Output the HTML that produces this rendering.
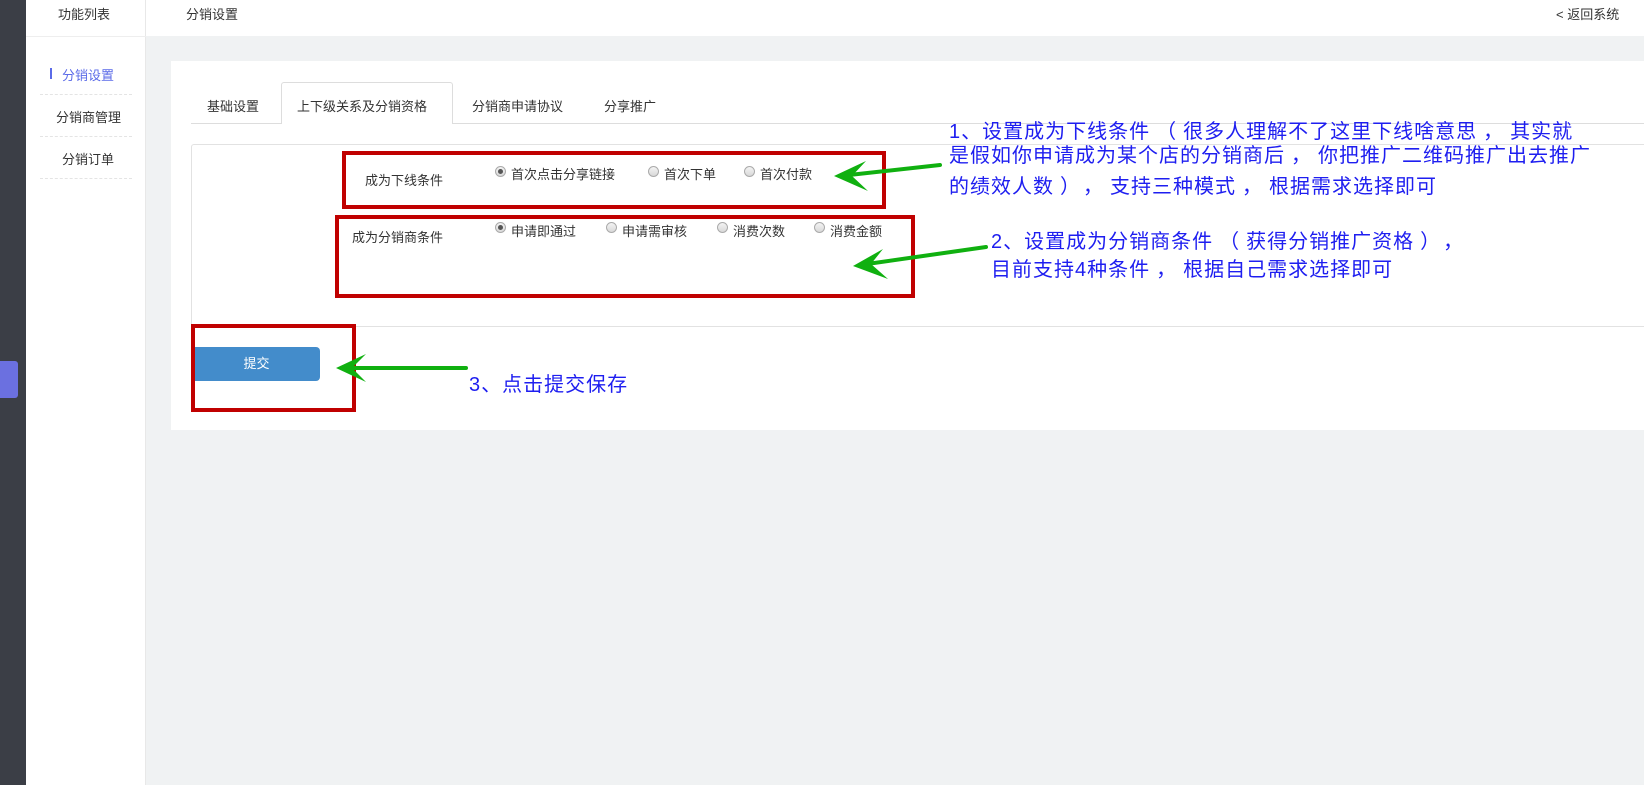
<!DOCTYPE html>
<html><head><meta charset="utf-8"><style>
*{margin:0;padding:0;box-sizing:border-box}
body{width:1644px;height:785px;position:relative;overflow:hidden;background:#f0f2f3;font-family:"Liberation Sans","Noto Sans CJK SC",sans-serif;font-size:13px;color:#333}
.a{position:absolute}
.red{position:absolute;border:4px solid #c00000}
.blue{position:absolute;color:#1e1ef0;font-size:20px;line-height:26px;white-space:nowrap;letter-spacing:1px}
.blue i{font-style:normal;margin:0 6px}
.r{position:absolute;width:11px;height:11px;border-radius:50%;border:1px solid #aaa;background:linear-gradient(#f4f4f4,#d8d8d8)}
.r.on::after{content:"";position:absolute;left:2px;top:2px;width:5px;height:5px;border-radius:50%;background:#555}
.t{position:absolute;white-space:nowrap}
</style></head><body>
<div class="a" style="left:0;top:0;width:26px;height:785px;background:#3b3e46"></div>
<div class="a" style="left:0;top:361px;width:18px;height:37px;background:#6b70e0;border-radius:0 3px 3px 0"></div>
<div class="a" style="left:26px;top:0;width:120px;height:785px;background:#fff;border-right:1px solid #e8e8e8"></div>
<div class="a" style="left:146px;top:0;width:1498px;height:36px;background:#fff"></div>
<div class="a" style="left:26px;top:36px;width:120px;height:1px;background:#eee"></div>
<div class="t" style="left:58px;top:4px">功能列表</div>
<div class="t" style="left:186px;top:4px">分销设置</div>
<div class="t" style="left:1556px;top:4px">&lt; 返回系统</div>
<div class="a" style="left:50px;top:68px;width:2px;height:11px;background:#5b6be8"></div>
<div class="t" style="left:62px;top:65px;color:#5b6be8">分销设置</div>
<div class="a" style="left:40px;top:94px;width:92px;border-top:1px dashed #e4e4e4"></div>
<div class="t" style="left:56px;top:107px">分销商管理</div>
<div class="a" style="left:40px;top:136px;width:92px;border-top:1px dashed #e4e4e4"></div>
<div class="t" style="left:62px;top:149px">分销订单</div>
<div class="a" style="left:40px;top:178px;width:92px;border-top:1px dashed #e4e4e4"></div>

<div class="a" style="left:171px;top:61px;width:1473px;height:369px;background:#fff"></div>
<div class="a" style="left:191px;top:123px;width:1453px;height:1px;background:#ddd"></div>
<div class="a" style="left:281px;top:82px;width:172px;height:42px;background:#fff;border:1px solid #ddd;border-bottom:none;border-radius:3px 3px 0 0"></div>
<div class="t" style="left:207px;top:96px">基础设置</div>
<div class="t" style="left:297px;top:96px">上下级关系及分销资格</div>
<div class="t" style="left:472px;top:96px">分销商申请协议</div>
<div class="t" style="left:604px;top:96px">分享推广</div>
<div class="a" style="left:191px;top:144px;width:1453px;height:183px;border:1px solid #e2e2e2;border-right:none;border-radius:3px 0 0 3px"></div>

<div class="t" style="left:365px;top:170px">成为下线条件</div>
<div class="r on" style="left:495px;top:166px"></div><div class="t" style="left:511px;top:164px">首次点击分享链接</div>
<div class="r" style="left:648px;top:166px"></div><div class="t" style="left:664px;top:164px">首次下单</div>
<div class="r" style="left:744px;top:166px"></div><div class="t" style="left:760px;top:164px">首次付款</div>
<div class="t" style="left:352px;top:227px">成为分销商条件</div>
<div class="r on" style="left:495px;top:222px"></div><div class="t" style="left:511px;top:221px">申请即通过</div>
<div class="r" style="left:606px;top:222px"></div><div class="t" style="left:622px;top:221px">申请需审核</div>
<div class="r" style="left:717px;top:222px"></div><div class="t" style="left:733px;top:221px">消费次数</div>
<div class="r" style="left:814px;top:222px"></div><div class="t" style="left:830px;top:221px">消费金额</div>

<div class="a" style="left:193px;top:347px;width:127px;height:34px;background:#438ccb;border-radius:0 4px 4px 0;color:#fff;text-align:center;line-height:34px">提交</div>

<div class="red" style="left:342px;top:151px;width:544px;height:58px"></div>
<div class="red" style="left:335px;top:215px;width:580px;height:83px"></div>
<div class="red" style="left:191px;top:324px;width:165px;height:88px"></div>

<svg class="a" style="left:0;top:0" width="1644" height="785">
<g stroke="#10b010" stroke-width="4" fill="none" stroke-linecap="round">
<line x1="940" y1="165" x2="840" y2="176"/>
<line x1="986" y1="247" x2="860" y2="265"/>
<line x1="466" y1="368" x2="342" y2="368"/>
</g>
<g fill="#10b010">
<polygon points="834,176 866,161 852,176 868,191"/>
<polygon points="853,266 883,249 871,264 888,279"/>
<polygon points="336,368 366,354 352,368 366,382"/>
</g>
</svg>

<div class="blue" style="left:949px;top:119px">1、设置成为下线条件<i>（</i>很多人理解不了这里下线啥意思<i>，</i>其实就</div>
<div class="blue" style="left:949px;top:143px">是假如你申请成为某个店的分销商后<i>，</i>你把推广二维码推广出去推广</div>
<div class="blue" style="left:949px;top:174px">的绩效人数<i>）</i><i>，</i>支持三种模式<i>，</i>根据需求选择即可</div>
<div class="blue" style="left:991px;top:229px">2、设置成为分销商条件<i>（</i>获得分销推广资格<i>）</i><i>，</i></div>
<div class="blue" style="left:991px;top:257px">目前支持4种条件<i>，</i>根据自己需求选择即可</div>
<div class="blue" style="left:469px;top:372px">3、点击提交保存</div>
</body></html>
